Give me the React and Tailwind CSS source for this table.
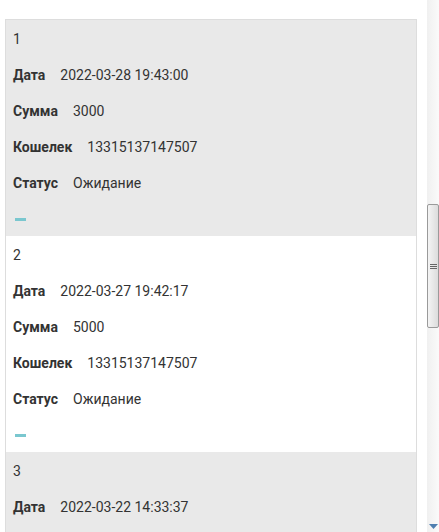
import React from 'react';

const rows = [
  { n: 1, date: '2022-03-28 19:43:00', sum: '3000', wallet: '13315137147507', status: 'Ожидание' },
  { n: 2, date: '2022-03-27 19:42:17', sum: '5000', wallet: '13315137147507', status: 'Ожидание' },
  { n: 3, date: '2022-03-22 14:33:37', sum: '2000', wallet: '13315137147507', status: 'Ожидание' },
];

const Field = ({ label, value }) => (
  <div className="flex h-[36px] items-center gap-[15px] pt-[3px]">
    <span className="font-bold">{label}</span>
    <span>{value}</span>
  </div>
);

const Row = ({ row, odd }) => (
  <div className={odd ? 'bg-[#e9e9e9] pl-[7px]' : 'bg-white pl-[7px]'}>
    <div className="flex h-[36px] items-center pt-[3px]">{row.n}</div>
    <Field label="Дата" value={row.date} />
    <Field label="Сумма" value={row.sum} />
    <Field label="Кошелек" value={row.wallet} />
    <Field label="Статус" value={row.status} />
    <div className="flex h-[36px] items-center pl-[2px] pt-[2px]">
      <div className="h-[3px] w-[11px] bg-[#7ac7cf]" />
    </div>
  </div>
);

const Scrollbar = () => (
  <div className="flex h-full w-[12px] flex-col bg-gradient-to-r from-[#f0f0f0] to-[#fafafa]">
    <div className="h-[204px]" />
    <div className="flex h-[124px] items-center justify-center rounded-[2px] border border-[#9a9a9a] bg-gradient-to-r from-[#f4f4f4] to-[#dcdcdc]">
      <div className="flex flex-col gap-[1px]">
        <div className="h-[1px] w-[7px] bg-[#666]" />
        <div className="h-[1px] w-[7px] bg-[#666]" />
        <div className="h-[1px] w-[7px] bg-[#666]" />
      </div>
    </div>
    <div className="flex-1" />
    <div className="flex h-[8px] justify-center pb-[1px]">
      <svg width="9" height="5" viewBox="0 0 9 5"><path d="M0 0 H9 L4.5 5 Z" fill="#4f7fb0" /></svg>
    </div>
  </div>
);

export default function App() {
  return (
    <div className="flex h-[532px] w-[439px] overflow-hidden bg-white text-[14px] text-[#333] [font-family:Roboto,'Liberation_Sans',sans-serif]">
      <div className="w-[427px] pl-[5px] pt-[19px]">
        <div className="w-[412px] border-x border-t border-[#dddddd]">
          {rows.map((r, i) => (
            <Row key={r.n} row={r} odd={i % 2 === 0} />
          ))}
        </div>
      </div>
      <Scrollbar />
    </div>
  );
}
